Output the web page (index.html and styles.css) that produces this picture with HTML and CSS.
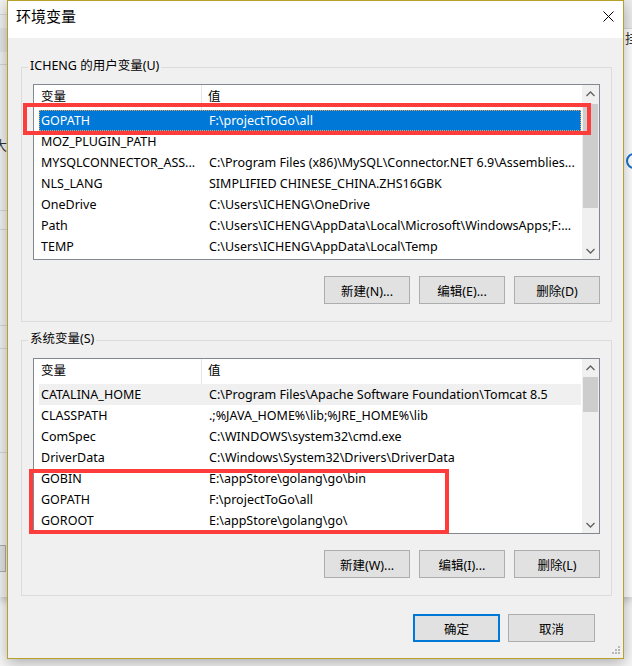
FILE: index.html
```html
<!DOCTYPE html>
<html lang="zh-CN">
<head>
<meta charset="utf-8">
<title>环境变量</title>
<link rel="stylesheet" href="styles.css">
</head>
<body>
<div class="desktop">
  <div class="bgwin">
    <div class="bg-left">
      <div class="bgl-top"></div>
      <div class="bgl-band"></div>
      <div class="bgl-seg bgl-s1"></div>
      <div class="bgl-char">大</div>
      <div class="bgl-seg bgl-s2"></div>
      <div class="bgl-seg bgl-s3"></div>
      <div class="bgl-seg bgl-s4"></div>
      <div class="bgl-seg bgl-s5"></div>
      <div class="bgl-seg bgl-s6"></div>
      <div class="bgl-btn"></div>
    </div>
    <div class="bg-mid"></div>
    <div class="bg-right">
      <div class="bgr-top"></div>
      <div class="bgr-char">挂</div>
      <div class="bgr-arc"></div>
    </div>
  </div>

  <div class="dialog">
    <div class="titlebar">
      <span class="title">环境变量</span>
      <svg class="close" width="11" height="11" viewBox="0 0 11 11"><path d="M0.5 0.5 L10.5 10.5 M10.5 0.5 L0.5 10.5" stroke="#000" stroke-width="1" fill="none"/></svg>
    </div>
    <div class="body">
      <div class="group">
        <div class="group-label">ICHENG 的用户变量(U)</div>
        <div class="list">
          <div class="list-main">
            <div class="list-head"><div class="hcell c1">变量</div><div class="hcell c2">值</div></div>
            <div class="rows">
              <div class="row selected"><span class="c1">GOPATH</span><span class="c2">F:\projectToGo\all</span></div>
              <div class="row"><span class="c1">MOZ_PLUGIN_PATH</span><span class="c2"></span></div>
              <div class="row"><span class="c1">MYSQLCONNECTOR_ASS...</span><span class="c2">C:\Program Files (x86)\MySQL\Connector.NET 6.9\Assemblies...</span></div>
              <div class="row"><span class="c1">NLS_LANG</span><span class="c2">SIMPLIFIED CHINESE_CHINA.ZHS16GBK</span></div>
              <div class="row"><span class="c1">OneDrive</span><span class="c2">C:\Users\ICHENG\OneDrive</span></div>
              <div class="row"><span class="c1">Path</span><span class="c2">C:\Users\ICHENG\AppData\Local\Microsoft\WindowsApps;F:...</span></div>
              <div class="row"><span class="c1">TEMP</span><span class="c2">C:\Users\ICHENG\AppData\Local\Temp</span></div>
            </div>
          </div>
          <div class="scrollbar">
            <div class="sb-btn"><svg width="9" height="6" viewBox="0 0 9 6"><path d="M0.5 5 L4.5 1 L8.5 5" stroke="#606060" stroke-width="1.3" fill="none"/></svg></div>
            <div class="sb-track"><div class="sb-thumb thumb-user"></div></div>
            <div class="sb-btn"><svg width="9" height="6" viewBox="0 0 9 6"><path d="M0.5 1 L4.5 5 L8.5 1" stroke="#606060" stroke-width="1.3" fill="none"/></svg></div>
          </div>
        </div>
        <div class="btnrow">
          <button class="btn">新建(N)...</button>
          <button class="btn">编辑(E)...</button>
          <button class="btn">删除(D)</button>
        </div>
      </div>

      <div class="group group-sys">
        <div class="group-label">系统变量(S)</div>
        <div class="list">
          <div class="list-main">
            <div class="list-head"><div class="hcell c1">变量</div><div class="hcell c2">值</div></div>
            <div class="rows">
              <div class="row inactive"><span class="c1">CATALINA_HOME</span><span class="c2">C:\Program Files\Apache Software Foundation\Tomcat 8.5</span></div>
              <div class="row"><span class="c1">CLASSPATH</span><span class="c2">.;%JAVA_HOME%\lib;%JRE_HOME%\lib</span></div>
              <div class="row"><span class="c1">ComSpec</span><span class="c2">C:\WINDOWS\system32\cmd.exe</span></div>
              <div class="row"><span class="c1">DriverData</span><span class="c2">C:\Windows\System32\Drivers\DriverData</span></div>
              <div class="row"><span class="c1">GOBIN</span><span class="c2">E:\appStore\golang\go\bin</span></div>
              <div class="row"><span class="c1">GOPATH</span><span class="c2">F:\projectToGo\all</span></div>
              <div class="row"><span class="c1">GOROOT</span><span class="c2">E:\appStore\golang\go\</span></div>
            </div>
          </div>
          <div class="scrollbar">
            <div class="sb-btn"><svg width="9" height="6" viewBox="0 0 9 6"><path d="M0.5 5 L4.5 1 L8.5 5" stroke="#606060" stroke-width="1.3" fill="none"/></svg></div>
            <div class="sb-track"><div class="sb-thumb thumb-sys"></div></div>
            <div class="sb-btn"><svg width="9" height="6" viewBox="0 0 9 6"><path d="M0.5 1 L4.5 5 L8.5 1" stroke="#606060" stroke-width="1.3" fill="none"/></svg></div>
          </div>
        </div>
        <div class="btnrow">
          <button class="btn">新建(W)...</button>
          <button class="btn">编辑(I)...</button>
          <button class="btn">删除(L)</button>
        </div>
      </div>

      <div class="footer">
        <button class="btn btn-wide btn-default">确定</button>
        <button class="btn btn-wide">取消</button>
      </div>
    </div>
    <svg class="grip" width="9" height="9" viewBox="0 0 9 9">
      <rect x="6" y="0" width="2" height="2" fill="#b8b8b8"/>
      <rect x="3" y="3" width="2" height="2" fill="#b8b8b8"/>
      <rect x="6" y="3" width="2" height="2" fill="#b8b8b8"/>
      <rect x="0" y="6" width="2" height="2" fill="#b8b8b8"/>
      <rect x="3" y="6" width="2" height="2" fill="#b8b8b8"/>
      <rect x="6" y="6" width="2" height="2" fill="#b8b8b8"/>
    </svg>
  </div>

  <div class="mark mark-user"></div>
  <div class="mark mark-sys"></div>
</div>
</body>
</html>
```

FILE: styles.css
```css
* { box-sizing: border-box; }
html, body { margin: 0; padding: 0; }
body {
  width: 632px;
  height: 666px;
  overflow: hidden;
  background: #f7f7f7;
  font-family: "Noto Sans", "Noto Sans CJK SC", sans-serif;
  font-size: 12.5px;
  color: #000;
}
.desktop { position: relative; width: 632px; height: 666px; overflow: hidden; }

/* background window */
.bgwin {
  height: 597px;
  display: flex;
  background: #f0f0f0;
  box-shadow: 0 3px 8px rgba(0,0,0,0.22);
}
.bg-left { width: 7px; display: flex; flex-direction: column; overflow: hidden; }
.bgl-top { height: 15px; border-bottom: 1px solid #d9d9d9; background: #f2f2f2; }
.bgl-band { height: 24px; margin-top: 13px; background: #e5e5e5; }
.bgl-seg { border-bottom: 1px solid #d6d6d6; }
.bgl-s1 { height: 13px; }
.bgl-char { height: 20px; margin-top: 70px; margin-left: -6px; line-height: 20px; font-size: 13px; color: #333; white-space: nowrap; }
.bgl-s2 { height: 56px; }
.bgl-s3 { height: 19px; }
.bgl-s4 { height: 96px; }
.bgl-s5 { height: 23px; }
.bgl-s6 { height: 104px; }
.bgl-btn { height: 27px; margin-top: 92px; border: 1px solid #adadad; border-left: none; background: #e1e1e1; width: 6px; }
.bg-mid { flex: 1; }
.bg-right { width: 8px; background: #fff; display: flex; flex-direction: column; overflow: hidden; }
.bgr-top { height: 29px; background: #ececec; border-bottom: 1px solid #d8d8d8; }
.bgr-char { height: 18px; line-height: 18px; padding-left: 1px; font-size: 13px; color: #333; white-space: nowrap; }
.bgr-arc { width: 16px; height: 16px; margin-top: 106px; margin-left: 2px; border: 2px solid #1a73c9; border-radius: 50%; }

/* dialog */
.dialog {
  position: absolute;
  left: 7px;
  top: 0;
  width: 617px;
  height: 659px;
  border: 1px solid #b6a22a;
  background: #f0f0f0;
  box-shadow: 0 4px 14px rgba(0,0,0,0.3);
  display: flex;
  flex-direction: column;
}
.titlebar {
  height: 37px;
  flex: none;
  background: #fff;
  display: flex;
  align-items: flex-start;
  justify-content: space-between;
  padding: 0 9px 0 8px;
}
.title { font-size: 15px; line-height: 20px; margin-top: 5px; font-family: "Noto Sans CJK SC", sans-serif; }
.close { margin-top: 10px; }

.body { padding: 29px 11px 0 13px; }
.group {
  border: 1px solid #dcdcdc;
  padding: 0 11px 17px 11px;
}
.group-sys { margin-top: 18px; }
.group-label {
  width: fit-content;
  height: 16px;
  line-height: 16px;
  margin: -10px 0 0 -5px;
  padding: 0 2px;
  background: #f0f0f0;
  white-space: nowrap;
}
.list {
  margin-top: 10px;
  height: 176px;
  border: 1px solid #828790;
  background: #fff;
  display: flex;
}
.group-sys .list { margin-top: 11px; }
.list-main { flex: 1; min-width: 0; display: flex; flex-direction: column; }
.list-head { height: 25px; display: flex; line-height: 24px; }
.hcell { white-space: nowrap; }
.hcell.c1 { width: 168px; padding-left: 7px; border-right: 1px solid #e5e5e5; }
.hcell.c2 { padding-left: 6px; }
.rows { padding: 0 1px 0 5px; }
.row { height: 21px; display: flex; align-items: center; white-space: nowrap; }
.row .c1 { width: 170px; flex: none; padding-left: 2px; overflow: hidden; }
.row .c2 { flex: 1; overflow: hidden; }
.row.selected { background: #0078d7; color: #fff; outline: 1px dotted #f0a050; outline-offset: -1px; }
.row.inactive { background: #f0f0f0; }

.scrollbar { width: 17px; flex: none; background: #f0f0f0; display: flex; flex-direction: column; }
.sb-btn { height: 17px; flex: none; display: flex; align-items: center; justify-content: center; }
.sb-track { flex: 1; }
.sb-thumb { margin: 2px 1px 0 1px; background: #cdcdcd; }
.thumb-user { height: 104px; }
.thumb-sys { height: 35px; margin-top: 1px; }

.btnrow { display: flex; justify-content: flex-end; gap: 9px; margin-top: 16px; }
.btn {
  width: 86px;
  height: 28px;
  padding: 0;
  border: 1px solid #adadad;
  background: #e1e1e1;
  font-family: "Noto Sans", "Noto Sans CJK SC", sans-serif;
  font-size: 12.5px;
  color: #000;
}
.footer { display: flex; justify-content: flex-end; gap: 8px; margin-top: 18px; padding-right: 17px; }
.btn-wide { width: 87px; }
.btn-default { border: 2px solid #0078d7; }

.grip { position: absolute; right: 2px; bottom: 3px; }

/* annotation marks */
.mark { position: absolute; border: 4px solid #fd3c3c; }
.mark-user { left: 23px; top: 103px; width: 568px; height: 32px; }
.mark-sys { left: 29px; top: 469px; width: 420px; height: 65px; }
```
